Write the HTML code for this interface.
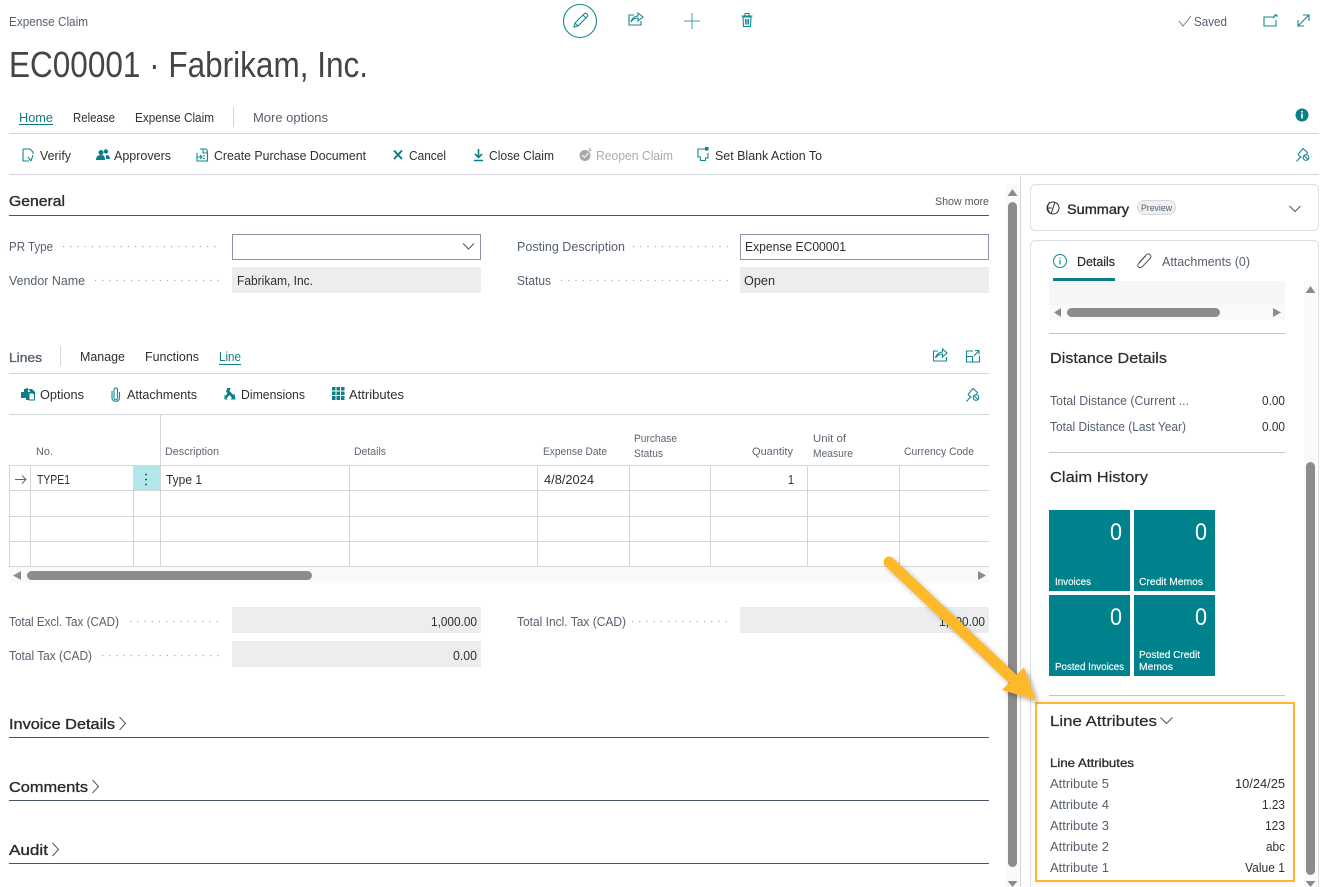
<!DOCTYPE html>
<html lang="en">
<head>
<meta charset="utf-8">
<title>Expense Claim</title>
<style>
html,body{margin:0;padding:0;background:#fff;width:1327px;height:887px;overflow:hidden}
svg{display:block}
text{font-family:"Liberation Sans",sans-serif;font-size:12.5px;fill:#2f2f2f}
.l{fill:#56606e}
.m{stroke:#2b2b2b;stroke-width:.35px;fill:#2b2b2b}
.h{font-size:14.5px}
.th{font-size:11px;fill:#5c6672}
.w{fill:#fff;font-size:10.5px;stroke:#fff;stroke-width:.15px}
.n{fill:#fff;font-size:24px}
.i{fill:none;stroke:#0f8a92;stroke-width:1.1}
.f{fill:#0a7f88}
.d{stroke:#a6adb6;stroke-width:1.2;stroke-dasharray:1.2 6;fill:none}
.g{stroke:#d2d5da;stroke-width:1;fill:none}
.k{stroke:#4a5666;stroke-width:1;fill:none}
.c{fill:none;stroke:#555;stroke-width:1}
.b{fill:#8c8c8c}
</style>
</head>
<body>
<svg width="1327" height="887" viewBox="0 0 1327 887" xmlns="http://www.w3.org/2000/svg">
<defs>
<filter id="s" x="-20%" y="-20%" width="140%" height="140%"><feDropShadow dx="3" dy="3" stdDeviation="2.5" flood-color="#000" flood-opacity=".3"/></filter>
</defs>

<!-- header -->
<text class="l" x="9" y="26" textLength="79" lengthAdjust="spacingAndGlyphs">Expense Claim</text>
<circle cx="580" cy="21" r="16.5" fill="none" stroke="#0f8a92" stroke-width="1.1"/>
<path class="i" d="M574 27l1-4 9-9c1-1 2-1 3 0s1 2 0 3l-9 9zM575 23l3 3M583 15l3 3"/>
<path class="i" d="M634 15h-5v10h12v-4M631 22c1-4 4-6 7-6v-3l5 4-5 4v-3c-3 0-5 1-7 4z"/>
<path d="M692 13v16M684 21h16" fill="none" stroke="#5fb0b6" stroke-width="1.2"/>
<path class="i" d="M743 17h8l-.5 9.500h-7zM741.500 16h11M745 16v-2.500h4V16M745.500 19v5.500M747 19v5.500M748.500 19v5.500"/>
<path d="M1179 21l4 5 8-10" fill="none" stroke="#777" stroke-width="1"/>
<text class="l" x="1194" y="26" textLength="33" lengthAdjust="spacingAndGlyphs">Saved</text>
<path class="i" d="M1274 17h-10v9h12v-6M1273 18l3-3M1274 15h3v2"/>
<path class="i" d="M1298 26l11-11M1303 15h6v6M1298 20v6h6" stroke-width="1"/>

<text x="9" y="77" textLength="359" lengthAdjust="spacingAndGlyphs" style="font-size:36px;fill:#454545">EC00001 · Fabrikam, Inc.</text>

<!-- tabs -->
<text x="19" y="122" textLength="34" lengthAdjust="spacingAndGlyphs" style="fill:#0b7c85">Home</text>
<rect x="19" y="124" width="34" height="1" fill="#0b7c85"/>
<text x="73" y="122" textLength="42" lengthAdjust="spacingAndGlyphs">Release</text>
<text x="135" y="122" textLength="79" lengthAdjust="spacingAndGlyphs">Expense Claim</text>
<path class="g" d="M233.500 107v20" stroke="#aaa"/>
<text class="l" x="253" y="122" textLength="75" lengthAdjust="spacingAndGlyphs">More options</text>
<circle cx="1302" cy="115" r="6.500" fill="#0a7f88"/>
<rect x="1301.200" y="113.500" width="1.600" height="5" fill="#fff"/><rect x="1301.200" y="111" width="1.600" height="1.600" fill="#fff"/>
<path class="g" d="M9 133.500h1310"/>

<!-- actions -->
<path class="i" d="M23 149h7l3 3v2M23 149v12h6M33 155l-2 6M28 157l3 4"/>
<text x="40" y="160" textLength="31" lengthAdjust="spacingAndGlyphs">Verify</text>
<circle cx="101" cy="152.500" r="2.500" class="f"/><circle cx="106" cy="151.500" r="2.200" class="f"/>
<path class="f" d="M96 160c0-3.500 2-5 5-5s4 1.500 4 5zM106 155c3 0 4 1.500 4 4h-4z"/>
<text x="114" y="160" textLength="57" lengthAdjust="spacingAndGlyphs">Approvers</text>
<path class="i" d="M200 149h6l1.500 2v10H197v-8M203 149v4h4.500M197 157h5M200 155l2 2-2 2M203 156h2M203 158.500h2"/>
<text x="214" y="160" textLength="152" lengthAdjust="spacingAndGlyphs">Create Purchase Document</text>
<path d="M394 150.500l8 8.500M402 150.500l-8 8.500" fill="none" stroke="#0a7f88" stroke-width="2"/>
<text x="409" y="160" textLength="37" lengthAdjust="spacingAndGlyphs">Cancel</text>
<path d="M478.500 149v8M475 154l3.500 3.500 3.500-3.500M474 160.500h9" fill="none" stroke="#0a7f88" stroke-width="1.600"/>
<text x="489" y="160" textLength="65" lengthAdjust="spacingAndGlyphs">Close Claim</text>
<circle cx="585" cy="155.500" r="5.500" fill="#a8a8a8"/><path d="M582 155l2.500 2.500 4-4.500" fill="none" stroke="#fff" stroke-width="1.100"/><path d="M589 148l2 2-2 1" fill="none" stroke="#a8a8a8"/>
<text x="596" y="160" textLength="77" lengthAdjust="spacingAndGlyphs" style="fill:#a9adb2">Reopen Claim</text>
<path class="i" d="M705 149h-7v8h2.500v3.500h5V158h2.500v-5" stroke-width="1.300"/><rect x="705" y="147" width="3.500" height="3.500" class="f"/>
<text x="715" y="160" textLength="107" lengthAdjust="spacingAndGlyphs">Set Blank Action To</text>
<path class="i" d="M1296.500 161.500l4-4.500M1298 154.500l5-6 4.500 4-1 1.500M1298 154.500l3.500 3"/><circle class="i" cx="1306" cy="157.500" r="2.800"/><path class="i" d="M1304 155.500l4 4"/>
<path class="g" d="M9 174.500h1310"/>

<!-- General -->
<text class="m h" x="9" y="206" textLength="56" lengthAdjust="spacingAndGlyphs">General</text>
<text x="935" y="205" textLength="54" lengthAdjust="spacingAndGlyphs" style="font-size:11px;fill:#555">Show more</text>
<path class="k" d="M9 215.500h980"/>

<text class="l" x="9" y="251" textLength="44" lengthAdjust="spacingAndGlyphs">PR Type</text>
<path class="d" d="M63 246.500h157"/>
<rect x="232.500" y="234.500" width="248" height="25" fill="#fff" stroke="#8a93a3"/>
<path class="c" d="M463 243.500l5.500 5.500 5.500-5.500"/>
<text class="l" x="517" y="251" textLength="108" lengthAdjust="spacingAndGlyphs">Posting Description</text>
<path class="d" d="M633 246.500h95"/>
<rect x="740.500" y="234.500" width="248" height="25" fill="#fff" stroke="#8a93a3"/>
<text x="745" y="251" textLength="101" lengthAdjust="spacingAndGlyphs">Expense EC00001</text>

<text class="l" x="9" y="285" textLength="76" lengthAdjust="spacingAndGlyphs">Vendor Name</text>
<path class="d" d="M95 280.500h125"/>
<rect x="232" y="267" width="249" height="26" fill="#ecedef"/>
<text x="237" y="285" textLength="76" lengthAdjust="spacingAndGlyphs">Fabrikam, Inc.</text>
<text class="l" x="517" y="285" textLength="34" lengthAdjust="spacingAndGlyphs">Status</text>
<path class="d" d="M561 280.500h167"/>
<rect x="740" y="267" width="249" height="26" fill="#ecedef"/>
<text x="744" y="285" textLength="31" lengthAdjust="spacingAndGlyphs">Open</text>

<!-- Lines -->
<text class="l" x="9" y="362" textLength="33" lengthAdjust="spacingAndGlyphs" style="stroke:#56606e;stroke-width:.35px">Lines</text>
<path class="g" d="M60.500 346v20"/>
<text x="80" y="361" textLength="45" lengthAdjust="spacingAndGlyphs">Manage</text>
<text x="145" y="361" textLength="54" lengthAdjust="spacingAndGlyphs">Functions</text>
<text x="219" y="361" textLength="22" lengthAdjust="spacingAndGlyphs" style="fill:#0b7c85">Line</text>
<rect x="219" y="364" width="22" height="1" fill="#0b7c85"/>
<path class="i" d="M938 351h-4.500v10h13v-4M935.500 358c1-4 4-6 7-6v-3l4.500 4-4.500 4v-3c-3 0-5 1-7 4z"/>
<path class="i" d="M973 351h-6.500v11h13v-6M966.500 356.500h6v5.500M974 356l4.500-5M975 350.500h4v4"/>
<path class="g" d="M9 373.500h980"/>

<path class="f" d="M21 392h3v-3l4-1v4h2v-1l-2-2h4l3 3v-1h0v9h-9v-2h-5z"/><path d="M29 393h4l1.500 1.500V400H29z" fill="#fff" stroke="#0a7f88"/>
<text x="40" y="399" textLength="44" lengthAdjust="spacingAndGlyphs">Options</text>
<path class="i" d="M114 389v8.500c0 3 3.500 3 3.500 0V390c0-2-2-2.500-3-1.500-.5.500-.5 1-.5 1M112 391v7c0 4.500 7.500 4.500 7.500 0v-6" stroke-width="1.200"/>
<text x="127" y="399" textLength="70" lengthAdjust="spacingAndGlyphs">Attachments</text>
<path class="f" d="M227 388h3.500l-1 3 4 4 1-1.500 1 6h-5l1.500-1.500-2.500-3-3 3.500 1.500 1h-3.500V394.500l1 1.500 2-3-1.500-1.500 1-2.500z"/>
<text x="241" y="399" textLength="64" lengthAdjust="spacingAndGlyphs">Dimensions</text>
<path class="f" d="M332 387h3.500v3.500H332zM336.500 387h3.500v3.500h-3.500zM341 387h3.500v3.500H341zM332 391.500h3.500v3.500H332zM336.500 391.500h3.500v3.500h-3.500zM341 391.500h3.500v3.500H341zM332 396h3.500v4H332zM336.500 396h3.500v4h-3.500zM341 396h3.500v4H341z"/>
<text x="349" y="399" textLength="55" lengthAdjust="spacingAndGlyphs">Attributes</text>
<path class="i" d="M966.500 401.500l4-4.500M968 394.500l5-6 4.500 4-1 1.500M968 394.500l3.500 3"/><circle class="i" cx="976" cy="397.500" r="2.800"/><path class="i" d="M974 395.500l4 4"/>
<path class="g" d="M9 414.500h980"/>

<!-- table -->
<text class="th" x="36" y="455" textLength="17" lengthAdjust="spacingAndGlyphs">No.</text>
<text class="th" x="165" y="455" textLength="54" lengthAdjust="spacingAndGlyphs">Description</text>
<text class="th" x="354" y="455" textLength="32" lengthAdjust="spacingAndGlyphs">Details</text>
<text class="th" x="543" y="455" textLength="64" lengthAdjust="spacingAndGlyphs">Expense Date</text>
<text class="th" x="634" y="442" textLength="43" lengthAdjust="spacingAndGlyphs">Purchase</text>
<text class="th" x="634" y="457" textLength="29" lengthAdjust="spacingAndGlyphs">Status</text>
<text class="th" x="752" y="455" textLength="41" lengthAdjust="spacingAndGlyphs">Quantity</text>
<text class="th" x="813" y="442" textLength="33" lengthAdjust="spacingAndGlyphs">Unit of</text>
<text class="th" x="813" y="457" textLength="40" lengthAdjust="spacingAndGlyphs">Measure</text>
<text class="th" x="904" y="455" textLength="70" lengthAdjust="spacingAndGlyphs">Currency Code</text>

<rect x="134" y="466" width="26" height="24" fill="#b2e6ea"/>
<path class="g" d="M9 465.500h980M9 490.500h980M9 516.500h980M9 541.500h980M9 566.500h980"/>
<path class="g" d="M160.500 414v152M9.500 465v102M30.500 465v102M133.500 465v102M349.500 465v102M537.500 465v102M629.500 465v102M710.500 465v102M807.500 465v102M899.500 465v102"/>
<path d="M15 479.500h11M22 475.500l4 4-4 4" fill="none" stroke="#666" stroke-width="1"/>
<circle cx="146" cy="474.500" r=".9" fill="#333"/><circle cx="146" cy="479.500" r=".9" fill="#333"/><circle cx="146" cy="484.500" r=".9" fill="#333"/>
<text x="37" y="484" textLength="33" lengthAdjust="spacingAndGlyphs">TYPE1</text>
<text x="166" y="484" textLength="36" lengthAdjust="spacingAndGlyphs">Type 1</text>
<text x="544" y="484" textLength="50" lengthAdjust="spacingAndGlyphs">4/8/2024</text>
<text x="788" y="484" textLength="6" lengthAdjust="spacingAndGlyphs">1</text>

<rect x="9" y="567" width="980" height="16" fill="#fafafa"/>
<path class="b" d="M21 571v9l-8-4.500z"/>
<rect x="27" y="571" width="285" height="9" rx="4.500" class="b"/>
<path class="b" d="M978 571v9l8-4.500z"/>

<!-- totals -->
<text class="l" x="9" y="626" textLength="110" lengthAdjust="spacingAndGlyphs">Total Excl. Tax (CAD)</text>
<path class="d" d="M130 621.500h90"/>
<rect x="232" y="607" width="249" height="26" fill="#ecedef"/>
<text x="431" y="626" textLength="46" lengthAdjust="spacingAndGlyphs">1,000.00</text>
<text class="l" x="517" y="626" textLength="109" lengthAdjust="spacingAndGlyphs">Total Incl. Tax (CAD)</text>
<path class="d" d="M632 621.500h96"/>
<rect x="740" y="607" width="249" height="26" fill="#ecedef"/>
<text x="939" y="626" textLength="46" lengthAdjust="spacingAndGlyphs">1,000.00</text>
<text class="l" x="9" y="660" textLength="83" lengthAdjust="spacingAndGlyphs">Total Tax (CAD)</text>
<path class="d" d="M102 655.500h118"/>
<rect x="232" y="641" width="249" height="26" fill="#ecedef"/>
<text x="453" y="660" textLength="24" lengthAdjust="spacingAndGlyphs">0.00</text>

<!-- fast tabs -->
<text class="m h" x="9" y="729" textLength="106" lengthAdjust="spacingAndGlyphs">Invoice Details</text>
<path class="c" d="M119.500 717l6 6.500-6 6.500"/>
<path class="k" d="M9 737.500h980"/>
<text class="m h" x="9" y="792" textLength="79" lengthAdjust="spacingAndGlyphs">Comments</text>
<path class="c" d="M92.500 780l6 6.500-6 6.500"/>
<path class="k" d="M9 800.500h980"/>
<text class="m h" x="9" y="855" textLength="39" lengthAdjust="spacingAndGlyphs">Audit</text>
<path class="c" d="M52.500 843l6 6.500-6 6.500"/>
<path class="k" d="M9 863.500h980"/>

<!-- main scrollbar -->
<rect x="1005" y="184" width="15" height="703" fill="#fafafa"/>
<path class="b" d="M1007.500 196l5-7 5 7z"/>
<rect x="1008" y="202" width="9" height="665" rx="4.500" class="b"/>
<path class="b" d="M1007.500 881l5 6 5-6z"/>
<path class="g" d="M1020.500 176v711"/>

<!-- summary -->
<rect x="1030.500" y="184.500" width="288" height="46" rx="5" fill="#fff" stroke="#dcdfe3"/>
<circle cx="1053" cy="208" r="6" fill="none" stroke="#333"/>
<path d="M1055 202l-4 12M1047 208h5M1050 202c-3 3-3 7 0 11" fill="none" stroke="#333" stroke-width="1"/>
<text class="m" x="1067" y="214" textLength="62" lengthAdjust="spacingAndGlyphs" style="font-size:13.500px">Summary</text>
<rect x="1137.500" y="200.500" width="38" height="14" rx="7" fill="#eef0f2" stroke="#d3d6da"/>
<text x="1141" y="211" textLength="31" lengthAdjust="spacingAndGlyphs" style="font-size:9.500px;fill:#555f6c">Preview</text>
<path class="c" d="M1289.500 206l5.500 5.500 5.500-5.500"/>

<!-- details card -->
<rect x="1030.500" y="240.500" width="288" height="660" rx="5" fill="#fff" stroke="#dcdfe3"/>
<circle cx="1060" cy="261" r="6.500" fill="none" stroke="#0f8a92"/>
<path d="M1060 260v4.500M1060 257.500v1.300" stroke="#0f8a92" stroke-width="1.200" fill="none"/>
<text class="m" x="1077" y="266" textLength="38" lengthAdjust="spacingAndGlyphs" style="stroke-width:.2px">Details</text>
<rect x="1053" y="278" width="62" height="3" fill="#0a7f88"/>
<path d="M1146 255.500l-6 6.500c-2 2-3 3.500-1.500 5s3 .5 4.500-1l7-7.500c1.500-1.500 1-3-.2-4s-2.500-.8-4 .8l-6.500 7" fill="none" stroke="#555" stroke-width="1"/>
<text class="l" x="1162" y="266" textLength="88" lengthAdjust="spacingAndGlyphs">Attachments (0)</text>

<rect x="1049" y="281" width="236" height="24" fill="#f5f6f8"/>
<rect x="1049" y="305" width="236" height="15" fill="#fafafa"/>
<path class="b" d="M1061 308v9l-7-4.500z"/>
<rect x="1067" y="308" width="153" height="9" rx="4.500" class="b"/>
<path class="b" d="M1273 308v9l8-4.500z"/>
<path d="M1049 333.500h236" stroke="#c2c5ca" fill="none"/>

<text class="m h" x="1050" y="363" textLength="117" lengthAdjust="spacingAndGlyphs" style="stroke-width:.2px">Distance Details</text>
<text class="l" x="1050" y="405" textLength="139" lengthAdjust="spacingAndGlyphs">Total Distance (Current ...</text>
<text x="1262" y="405" textLength="23" lengthAdjust="spacingAndGlyphs">0.00</text>
<text class="l" x="1050" y="431" textLength="136" lengthAdjust="spacingAndGlyphs">Total Distance (Last Year)</text>
<text x="1262" y="431" textLength="23" lengthAdjust="spacingAndGlyphs">0.00</text>
<path d="M1049 452.500h236" stroke="#c2c5ca" fill="none"/>
<text class="m h" x="1050" y="482" textLength="98" lengthAdjust="spacingAndGlyphs" style="stroke-width:.2px">Claim History</text>

<!-- tiles -->
<rect x="1049" y="510" width="81" height="81" fill="#00828c"/>
<rect x="1134" y="510" width="81" height="81" fill="#00828c"/>
<rect x="1049" y="595" width="81" height="81" fill="#00828c"/>
<rect x="1134" y="595" width="81" height="81" fill="#00828c"/>
<text class="n" x="1110" y="540" textLength="12" lengthAdjust="spacingAndGlyphs">0</text>
<text class="n" x="1195" y="540" textLength="12" lengthAdjust="spacingAndGlyphs">0</text>
<text class="n" x="1110" y="625" textLength="12" lengthAdjust="spacingAndGlyphs">0</text>
<text class="n" x="1195" y="625" textLength="12" lengthAdjust="spacingAndGlyphs">0</text>
<text class="w" x="1055" y="585" textLength="36" lengthAdjust="spacingAndGlyphs">Invoices</text>
<text class="w" x="1139" y="585" textLength="64" lengthAdjust="spacingAndGlyphs">Credit Memos</text>
<text class="w" x="1055" y="670" textLength="69" lengthAdjust="spacingAndGlyphs">Posted Invoices</text>
<text class="w" x="1139" y="658" textLength="61" lengthAdjust="spacingAndGlyphs">Posted Credit</text>
<text class="w" x="1139" y="670" textLength="34" lengthAdjust="spacingAndGlyphs">Memos</text>
<path d="M1049 695.500h236" stroke="#c2c5ca" fill="none"/>

<!-- line attributes -->
<text class="m h" x="1050" y="726" textLength="107" lengthAdjust="spacingAndGlyphs" style="stroke-width:.2px">Line Attributes</text>
<path class="c" d="M1160.500 717.500l6 6 6-6"/>
<text class="m" x="1050" y="767" textLength="84" lengthAdjust="spacingAndGlyphs" style="font-size:12px;stroke-width:.3px">Line Attributes</text>
<text class="l" x="1050" y="788" textLength="59" lengthAdjust="spacingAndGlyphs">Attribute 5</text>
<text x="1235" y="788" textLength="50" lengthAdjust="spacingAndGlyphs">10/24/25</text>
<text class="l" x="1050" y="809" textLength="59" lengthAdjust="spacingAndGlyphs">Attribute 4</text>
<text x="1262" y="809" textLength="23" lengthAdjust="spacingAndGlyphs">1.23</text>
<text class="l" x="1050" y="830" textLength="59" lengthAdjust="spacingAndGlyphs">Attribute 3</text>
<text x="1265" y="830" textLength="20" lengthAdjust="spacingAndGlyphs">123</text>
<text class="l" x="1050" y="851" textLength="59" lengthAdjust="spacingAndGlyphs">Attribute 2</text>
<text x="1266" y="851" textLength="19" lengthAdjust="spacingAndGlyphs">abc</text>
<text class="l" x="1050" y="872" textLength="59" lengthAdjust="spacingAndGlyphs">Attribute 1</text>
<text x="1245" y="872" textLength="40" lengthAdjust="spacingAndGlyphs">Value 1</text>

<!-- right scrollbar -->
<rect x="1304" y="281" width="13" height="606" fill="#fafafa"/>
<path class="b" d="M1305.500 293l5-7 5 7z"/>
<rect x="1306" y="462" width="9" height="413" rx="4.500" class="b"/>
<path class="b" d="M1305.500 881l5 6 5-6z"/>

<!-- annotation -->
<rect x="1036" y="703" width="258" height="178" fill="none" stroke="#fdb92b" stroke-width="2"/>
<g filter="url(#s)">
<path d="M889 562L1014 680" fill="none" stroke="#fdb92b" stroke-width="11" stroke-linecap="round"/>
<path d="M1024 667L1036 700 1002 690z" fill="#fdb92b"/>
</g>
</svg>
</body>
</html>
